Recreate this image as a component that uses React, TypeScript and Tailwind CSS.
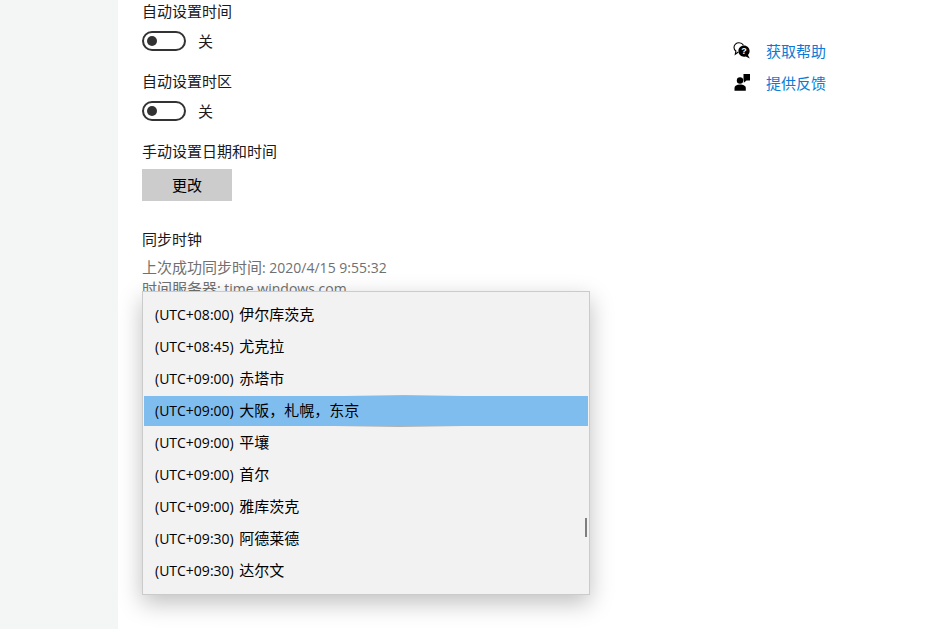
const zones = [
  ["(UTC+08:00)", "伊尔库茨克"],
  ["(UTC+08:45)", "尤克拉"],
  ["(UTC+09:00)", "赤塔市"],
  ["(UTC+09:00)", "大阪，札幌，东京"],
  ["(UTC+09:00)", "平壤"],
  ["(UTC+09:00)", "首尔"],
  ["(UTC+09:00)", "雅库茨克"],
  ["(UTC+09:30)", "阿德莱德"],
  ["(UTC+09:30)", "达尔文"],
];

function Toggle() {
  return (
    <div className="mt-[10px] flex h-5 items-center">
      <span className="flex h-5 w-[44px] items-center rounded-full border-2 border-[#333333] pl-[3px]">
        <span className="h-[10px] w-[10px] rounded-full bg-[#333333]" />
      </span>
      <span className="ml-3 text-[#1a1a1a]">关</span>
    </div>
  );
}

function HelpIcon() {
  return (
    <svg width="18" height="18" viewBox="0 0 18 18" className="shrink-0">
      <path d="M6 .8C3.2.8 1 2.8 1 5.4c0 1.500.7 2.800 1.900 3.600l-.6 3.200 3-2.200" fill="none" stroke="#000" strokeWidth="1.1" />
      <path d="M6 .8c1.900 0 3.600.9 4.500 2.400" fill="none" stroke="#000" strokeWidth="1.1" />
      <path d="M11 3.600c3.100 0 5.600 2.400 5.600 5.500 0 1.600-.7 3-1.700 4l1.900 3.400-4-2c-.6.1-1.200.2-1.800.2-3.100 0-5.600-2.500-5.600-5.600S7.900 3.600 11 3.600z" fill="#000" />
      <text x="11" y="12.400" textAnchor="middle" fontSize="9" fontWeight="700" fill="#fff" fontFamily="Liberation Sans, sans-serif">?</text>
    </svg>
  );
}

function FeedbackIcon() {
  return (
    <svg width="18" height="18" viewBox="0 0 18 18" className="shrink-0">
      <circle cx="7" cy="6.500" r="3.200" fill="#000" />
      <path d="M1.500 16.800v-2.800c0-2.200 2.200-3.500 5.500-3.500s5.800 1.300 5.800 3.500v2.800z" fill="#000" />
      <path d="M10.500 0h6.500v6.500h-3.500L10.800 8.800V6.500h-.3z" fill="#000" />
    </svg>
  );
}

export default function App() {
  return (
    <div className="relative flex h-[629px] w-[951px] overflow-hidden bg-white font-['Open_Sans','Noto_Sans_CJK_SC',sans-serif] text-[15px] leading-5">
      <aside className="w-[118px] shrink-0 bg-[#f4f5f5]" />

      <main className="flex-1 pl-6 pt-px">
        <div className="text-[#1a1a1a]">自动设置时间</div>
        <Toggle />
        <div className="mt-5 text-[#1a1a1a]">自动设置时区</div>
        <Toggle />
        <div className="mt-5 text-[#1a1a1a]">手动设置日期和时间</div>
        <button className="mt-2 block h-8 w-[90px] bg-[#cccccc] text-black">更改</button>
        <div className="mt-7 text-[#1a1a1a]">同步时钟</div>
        <div className="mt-2 text-[#707070]">
          上次成功同步时间<span className="text-[14px]">: 2020/4/15 9:55:32</span>
        </div>
        <div className="text-[#707070]">
          时间服务器<span className="text-[14px]">: time.windows.com</span>
        </div>
      </main>

      <aside className="flex w-[218px] shrink-0 flex-col gap-3 pt-[41px]">
        <div className="flex h-5 items-center">
          <HelpIcon />
          <a className="ml-[15px] text-[#0a7bd6]">获取帮助</a>
        </div>
        <div className="flex h-5 items-center">
          <FeedbackIcon />
          <a className="ml-[15px] text-[#0a7bd6]">提供反馈</a>
        </div>
      </aside>

      {/* open time zone dropdown */}
      <div className="absolute left-[142px] top-[291px] h-[304px] w-[448px] border border-[#cbcbcb] bg-[#f2f2f2] py-[6px] pl-px pr-px shadow-[0_8px_22px_rgba(0,0,0,0.25)]">
        {zones.map(([offset, name], i) => (
          <div
            key={offset + name}
            className={
              i === 3
                ? "relative flex h-8 items-center border-t-2 border-transparent bg-[#80bdef] bg-clip-padding pb-[2px] pl-[11px] text-black"
                : "flex h-8 items-center pl-[11px] text-black"
            }
          >
            <span>
              <span className="mr-[2px] text-[14px]">{offset} </span>
              {name}
            </span>
            {i === 3 && (
              <>
                <span className="absolute left-[200px] top-[-1px] h-px w-[120px] bg-gradient-to-r from-transparent via-[#b5b5b5] to-transparent" />
                <span className="absolute bottom-[-1px] left-[190px] h-px w-[130px] bg-gradient-to-r from-transparent via-[#b0b0b0] to-transparent" />
              </>
            )}
          </div>
        ))}
        <span className="absolute right-[2px] top-[226px] h-[19px] w-[2px] bg-[#7f7f7f]" />
      </div>
    </div>
  );
}
